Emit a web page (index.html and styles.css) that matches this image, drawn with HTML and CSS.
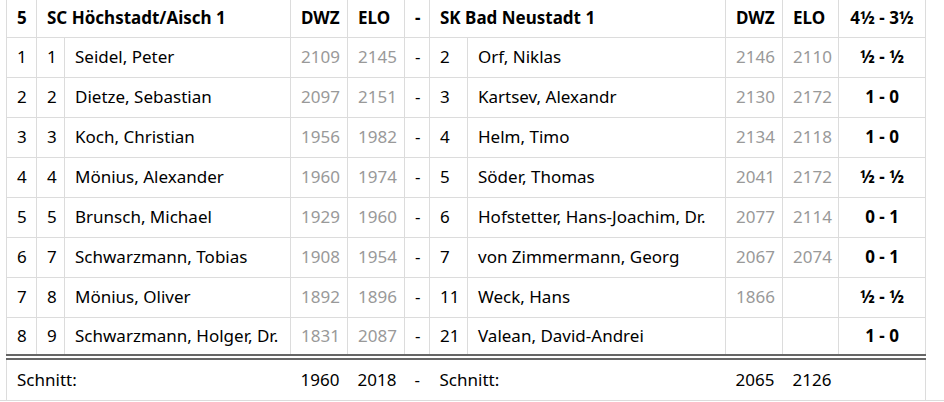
FILE: index.html
```html
<!DOCTYPE html>
<html lang="de">
<head>
<meta charset="utf-8">
<title>Mannschaftskampf</title>
<link rel="stylesheet" href="styles.css">
</head>
<body>
<div class="wrap">
<table class="match">
<colgroup>
<col class="c-br"><col class="c-rk"><col class="c-name1"><col class="c-dwz"><col class="c-elo"><col class="c-dash"><col class="c-rk2"><col class="c-name2"><col class="c-dwz"><col class="c-elo2"><col class="c-res">
</colgroup>
<thead>
<tr class="head">
<td>5</td><td colspan="2">SC Höchstadt/Aisch 1</td><td>DWZ</td><td>ELO</td><td>-</td><td colspan="2">SK Bad Neustadt 1</td><td>DWZ</td><td>ELO</td><td class="res">4½ - 3½</td>
</tr>
</thead>
<tbody>
<tr><td>1</td><td>1</td><td>Seidel, Peter</td><td class="num">2109</td><td class="num">2145</td><td>-</td><td>2</td><td>Orf, Niklas</td><td class="num">2146</td><td class="num">2110</td><td class="res">½ - ½</td></tr>
<tr><td>2</td><td>2</td><td>Dietze, Sebastian</td><td class="num">2097</td><td class="num">2151</td><td>-</td><td>3</td><td>Kartsev, Alexandr</td><td class="num">2130</td><td class="num">2172</td><td class="res">1 - 0</td></tr>
<tr><td>3</td><td>3</td><td>Koch, Christian</td><td class="num">1956</td><td class="num">1982</td><td>-</td><td>4</td><td>Helm, Timo</td><td class="num">2134</td><td class="num">2118</td><td class="res">1 - 0</td></tr>
<tr><td>4</td><td>4</td><td>Mönius, Alexander</td><td class="num">1960</td><td class="num">1974</td><td>-</td><td>5</td><td>Söder, Thomas</td><td class="num">2041</td><td class="num">2172</td><td class="res">½ - ½</td></tr>
<tr><td>5</td><td>5</td><td>Brunsch, Michael</td><td class="num">1929</td><td class="num">1960</td><td>-</td><td>6</td><td>Hofstetter, Hans-Joachim, Dr.</td><td class="num">2077</td><td class="num">2114</td><td class="res">0 - 1</td></tr>
<tr><td>6</td><td>7</td><td>Schwarzmann, Tobias</td><td class="num">1908</td><td class="num">1954</td><td>-</td><td>7</td><td>von Zimmermann, Georg</td><td class="num">2067</td><td class="num">2074</td><td class="res">0 - 1</td></tr>
<tr><td>7</td><td>8</td><td>Mönius, Oliver</td><td class="num">1892</td><td class="num">1896</td><td>-</td><td>11</td><td>Weck, Hans</td><td class="num">1866</td><td class="num"></td><td class="res">½ - ½</td></tr>
<tr><td>8</td><td>9</td><td>Schwarzmann, Holger, Dr.</td><td class="num">1831</td><td class="num">2087</td><td>-</td><td>21</td><td>Valean, David-Andrei</td><td class="num"></td><td class="num"></td><td class="res">1 - 0</td></tr>
</tbody>
<tfoot>
<tr class="foot"><td colspan="3">Schnitt:</td><td>1960</td><td>2018</td><td>-</td><td colspan="2">Schnitt:</td><td>2065</td><td>2126</td><td class="res"></td></tr>
</tfoot>
</table>
</div>
</body>
</html>
```

FILE: styles.css
```css
html, body {
  margin: 0;
  padding: 0;
  background: #fff;
}
body {
  font-family: "Noto Sans", "DejaVu Sans", sans-serif;
  font-size: 17px;
  color: #000;
}
.wrap {
  padding-left: 6px;
  border-bottom: 1px solid #dcdcdc;
  width: 938px;
}
.match {
  border-collapse: collapse;
  table-layout: fixed;
  width: 920px;
}
.c-br { width: 30px; }
.c-rk { width: 28px; }
.c-name1 { width: 226px; }
.c-dwz { width: 57px; }
.c-elo { width: 57px; }
.c-dash { width: 25px; }
.c-rk2 { width: 38px; }
.c-name2 { width: 258px; }
.c-elo2 { width: 56px; }
.c-res { width: 87px; }
.match td {
  border: 1px solid #dcdcdc;
  padding: 0 10px;
  height: 40px;
  line-height: 20px;
  white-space: nowrap;
  overflow: hidden;
  vertical-align: middle;
  box-sizing: border-box;
}
.match .head td {
  border-top: none;
  height: 37px;
  font-weight: bold;
}
.match td.num {
  color: #999;
}
.match td.res {
  text-align: center;
  font-weight: bold;
  padding: 0;
}
.match .foot td {
  border-top: 6px double #666;
  border-left: none;
  border-right: none;
  border-bottom: none;
  height: 43px;
}
.match .foot td:first-child {
  border-left: 1px solid #dcdcdc;
}
.match .foot td:last-child {
  border-right: 1px solid #dcdcdc;
}
```
